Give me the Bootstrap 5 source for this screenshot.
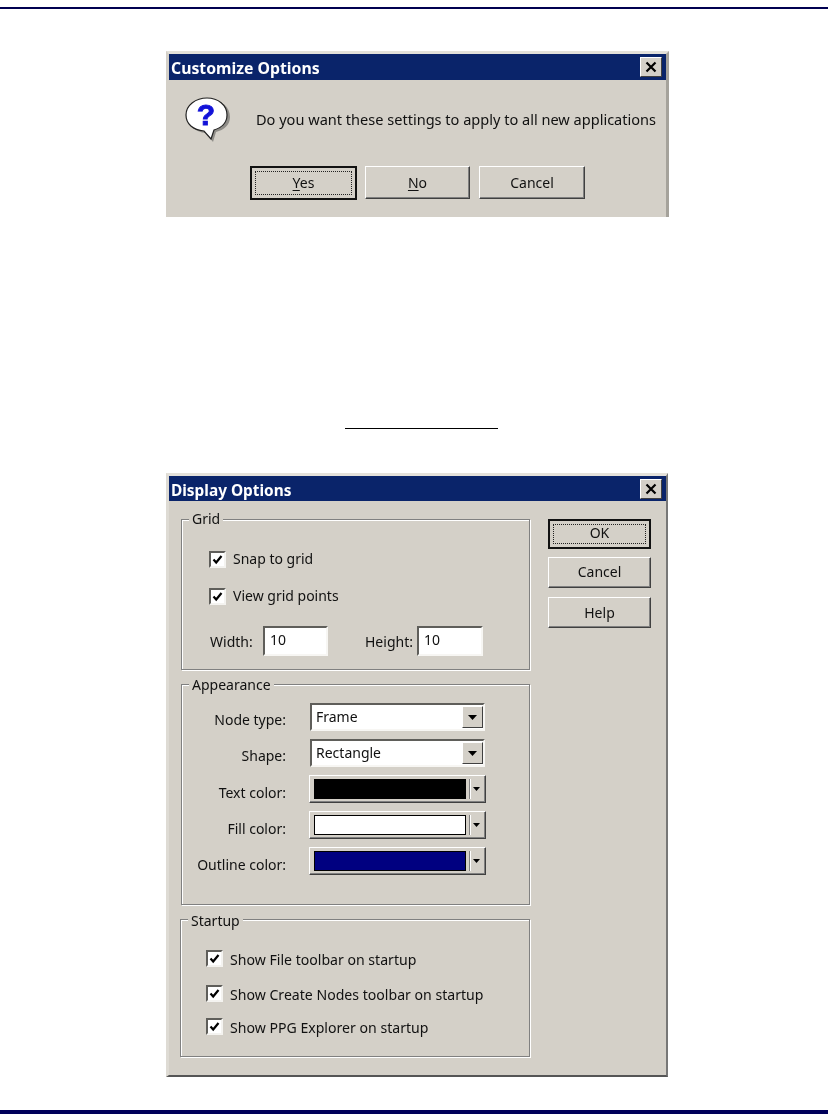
<!DOCTYPE html>
<html lang="en">
<head>
<meta charset="utf-8">
<title>Options dialogs</title>
<link href="https://cdn.jsdelivr.net/npm/bootstrap@5.3.0/dist/css/bootstrap.min.css" rel="stylesheet">
<style>
html,body{height:1114px;overflow:hidden;background:#fff}
body{font-family:"Noto Sans","DejaVu Sans",sans-serif;font-size:14px;color:#111;line-height:1.2}
.top-rule{height:2px;margin-top:7px;background:#000050}
.end-rule{height:4px;margin-top:33px;background:#00005a}
.mid-rule{width:153px;height:1px;margin:211px 0 44px 345px;background:#000}
.win{background:#d4d0c8;margin-left:166px;border:3px solid #d4d0c8;border-top-color:#e4e1da;filter:blur(.35px)}
.win-a{width:503px;height:166px;margin-top:42px;border-bottom:0;border-right-color:#a5a29b}
.win-b{width:502px;height:604px;border-right:2px solid #777;border-bottom:2px solid #555;border-left-color:#dedbd4}
.title{background:#0a246a;color:#fff;font-weight:700;padding:0 4px 0 2px}
.win-a .title{height:26px;font-size:15.8px}
.win-b .title{height:25px;font-size:15.4px}
.win-a .title-text{padding-top:2px}
.win-b .title-text{padding-top:5px}
.close-x{width:22px;height:20px;background:#d4d0c8;border:1px solid;border-color:#fff #404040 #404040 #fff}
.msg-row{padding:17px 0 0 16px}
.msg-text{margin-left:25px;padding-top:14px;font-size:14.55px}
.msg-btns{margin:23px 0 0 81px;gap:8px}
.msg-btns .wbtn{height:33px;width:105px}
.msg-btns .wbtn+.wbtn+.wbtn{margin-left:1px;width:106px}
.msg-btns .wbtn.is-default{height:34px;width:107px;padding-bottom:2px}
.wbtn{display:flex;align-items:center;justify-content:center;border-radius:0;padding:0;background:#d4d0c8;color:#111;font-size:14px;border:1px solid;border-color:#fff #404040 #404040 #fff;box-shadow:inset -1px -1px 0 #808080}
.wbtn.is-default{border:2px solid #111;box-shadow:none;position:relative}
.wbtn.is-default::after{content:"";position:absolute;inset:3px;border:1px dotted #222}
.wbtn u{text-underline-offset:2px}
.client{padding:18px 0 0 12px;gap:18px}
.left-col{width:349px;gap:14px}
.right-col{width:103px;gap:8px}
.right-col .wbtn{height:31px;width:103px;padding-bottom:3px}
.right-col .wbtn.is-default{height:30px}
.right-col .wbtn:last-child{margin-top:1px;padding-bottom:1px}
.group{position:relative;border:1px solid #808080;box-shadow:1px 1px 0 #fff,inset 1px 1px 0 #fff}
.group-name{position:absolute;left:7px;top:-9px;background:#d4d0c8;padding:0 3px;line-height:16px}
.g-look .group-name{top:-8px}
.g-start .group-name{top:-7px}
.g-grid{height:151px;padding:31px 0 0 27px}
.g-look{height:221px;padding:18px 0 0 0;gap:8px}
.g-start{height:138px;width:350px;margin-left:-1px;padding:30px 0 0 25px}
.check-row{height:17px;gap:7px;white-space:nowrap}
.g-grid .check-row{margin-bottom:20px}
.g-grid .check-row+.check-row{margin-bottom:21px}
.g-start .check-row{font-size:14.1px}
.g-start .check-row+.check-row{margin-top:18px}
.g-start .check-row+.check-row+.check-row{margin-top:16px}
.g-start .row-text{position:relative;top:2px}
.box{width:17px;height:17px;flex:none;background:#fff;border:2px solid;border-color:#5f5e5a #f4f3f0 #f4f3f0 #5f5e5a;display:flex;align-items:center;justify-content:center}
.size-row{padding-left:1px}
.lbl-w{width:53px;padding-top:3px}
.lbl-h{width:52px;margin-left:37px;padding-top:3px}
.edit{width:65px;height:30px;background:#fff;padding:4px 0 0 5px;border:2px solid;border-color:#5f5e5a #f7f6f3 #f7f6f3 #5f5e5a}
.edit-h{width:66px}
.look-row{height:28px;gap:24px}
.look-lbl{width:104px;text-align:right;padding-top:9px}
.look-lbl-low{padding-top:10px}
.combo{width:175px;height:28px;background:#fff;border:2px solid;border-color:#5f5e5a #f7f6f3 #f7f6f3 #5f5e5a;padding-left:4px}
.arrow-btn{width:21px;height:22px;background:#d4d0c8;border:1px solid;border-color:#fff #404040 #404040 #fff}
.swatch-btn{width:177px;height:28px;margin-left:-1px;background:#d4d0c8;border:1px solid;border-color:#fff #404040 #404040 #fff;box-shadow:inset -1px -1px 0 #808080;padding:4px 3px 4px 4px}
.swatch{width:152px;height:20px;border:1px solid #000}
.sw-black{background:#000}
.sw-white{background:#fff}
.sw-navy{background:#000080}
.split{width:2px;height:20px;margin-left:3px;border-left:1px solid #808080;border-right:1px solid #fff}
.split-arrow{flex:1}
</style>
</head>
<body>
<div class="top-rule"></div>

<div class="win win-a">
  <div class="title d-flex align-items-center justify-content-between">
    <span class="title-text">Customize Options</span>
    <span class="close-x d-flex align-items-center justify-content-center">
      <svg width="12" height="12" viewBox="0 0 12 12"><path d="M1.5 1.5 10.5 10.5M10.5 1.5 1.5 10.5" stroke="#000" stroke-width="2.2"/></svg>
    </span>
  </div>
  <div class="d-flex msg-row">
    <svg width="46" height="46" viewBox="0 0 46 46" class="flex-shrink-0">
      <path d="M25 3C37 3 45 10 45 20 45 28 39 33 31 35L28 45 21 36C10 35 3 29 3 20 3 10 13 3 25 3Z" fill="#8f8d88"/>
      <path d="M22 1C33 1 42 8 42 18 42 26 36 31 29 33L26 42 19 34C8 33 1 27 1 18 1 8 11 1 22 1Z" fill="#fff" stroke="#222" stroke-width="1.2"/>
      <text x="21" y="28" text-anchor="middle" font-family="Liberation Sans,sans-serif" font-weight="700" font-size="30" fill="#1212d8" stroke="#1212d8" stroke-width=".9">?</text>
    </svg>
    <div class="msg-text">Do you want these settings to apply to all new applications</div>
  </div>
  <div class="d-flex msg-btns">
    <button type="button" class="btn wbtn is-default"><span><u>Y</u>es</span></button>
    <button type="button" class="btn wbtn"><span><u>N</u>o</span></button>
    <button type="button" class="btn wbtn">Cancel</button>
  </div>
</div>

<div class="mid-rule"></div>

<div class="win win-b">
  <div class="title d-flex align-items-center justify-content-between">
    <span class="title-text">Display Options</span>
    <span class="close-x d-flex align-items-center justify-content-center">
      <svg width="12" height="12" viewBox="0 0 12 12"><path d="M1.5 1.5 10.5 10.5M10.5 1.5 1.5 10.5" stroke="#000" stroke-width="2.2"/></svg>
    </span>
  </div>
  <div class="d-flex client">
    <div class="d-flex flex-column left-col">
      <div class="group g-grid">
        <span class="group-name">Grid</span>
        <div class="d-flex align-items-center check-row"><span class="box"><svg width="11" height="11" viewBox="0 0 11 11"><path d="M1.5 5.5 4.2 8.5 9.5 2" fill="none" stroke="#000" stroke-width="2.2"/></svg></span><span class="row-text">Snap to grid</span></div>
        <div class="d-flex align-items-center check-row"><span class="box"><svg width="11" height="11" viewBox="0 0 11 11"><path d="M1.5 5.5 4.2 8.5 9.5 2" fill="none" stroke="#000" stroke-width="2.2"/></svg></span><span class="row-text">View grid points</span></div>
        <div class="d-flex align-items-center size-row">
          <span class="lbl-w">Width:</span><span class="edit">10</span>
          <span class="lbl-h">Height:</span><span class="edit edit-h">10</span>
        </div>
      </div>
      <div class="group g-look d-flex flex-column">
        <span class="group-name">Appearance</span>
        <div class="d-flex look-row"><span class="look-lbl">Node type:</span><div class="combo d-flex align-items-center justify-content-between"><span>Frame</span><span class="arrow-btn d-flex align-items-center justify-content-center"><svg width="9" height="5" viewBox="0 0 9 5"><path d="M0 0H9L4.5 5Z" fill="#000"/></svg></span></div></div>
        <div class="d-flex look-row"><span class="look-lbl">Shape:</span><div class="combo d-flex align-items-center justify-content-between"><span>Rectangle</span><span class="arrow-btn d-flex align-items-center justify-content-center"><svg width="9" height="5" viewBox="0 0 9 5"><path d="M0 0H9L4.5 5Z" fill="#000"/></svg></span></div></div>
        <div class="d-flex look-row"><span class="look-lbl look-lbl-low">Text color:</span><div class="swatch-btn d-flex align-items-center"><span class="swatch sw-black"></span><span class="split"></span><span class="split-arrow d-flex justify-content-center"><svg width="7" height="4" viewBox="0 0 7 4"><path d="M0 0H7L3.5 4Z" fill="#000"/></svg></span></div></div>
        <div class="d-flex look-row"><span class="look-lbl look-lbl-low">Fill color:</span><div class="swatch-btn d-flex align-items-center"><span class="swatch sw-white"></span><span class="split"></span><span class="split-arrow d-flex justify-content-center"><svg width="7" height="4" viewBox="0 0 7 4"><path d="M0 0H7L3.5 4Z" fill="#000"/></svg></span></div></div>
        <div class="d-flex look-row"><span class="look-lbl look-lbl-low">Outline color:</span><div class="swatch-btn d-flex align-items-center"><span class="swatch sw-navy"></span><span class="split"></span><span class="split-arrow d-flex justify-content-center"><svg width="7" height="4" viewBox="0 0 7 4"><path d="M0 0H7L3.5 4Z" fill="#000"/></svg></span></div></div>
      </div>
      <div class="group g-start">
        <span class="group-name">Startup</span>
        <div class="d-flex align-items-center check-row"><span class="box"><svg width="11" height="11" viewBox="0 0 11 11"><path d="M1.5 5.5 4.2 8.5 9.5 2" fill="none" stroke="#000" stroke-width="2.2"/></svg></span><span class="row-text">Show File toolbar on startup</span></div>
        <div class="d-flex align-items-center check-row"><span class="box"><svg width="11" height="11" viewBox="0 0 11 11"><path d="M1.5 5.5 4.2 8.5 9.5 2" fill="none" stroke="#000" stroke-width="2.2"/></svg></span><span class="row-text">Show Create Nodes toolbar on startup</span></div>
        <div class="d-flex align-items-center check-row"><span class="box"><svg width="11" height="11" viewBox="0 0 11 11"><path d="M1.5 5.5 4.2 8.5 9.5 2" fill="none" stroke="#000" stroke-width="2.2"/></svg></span><span class="row-text">Show PPG Explorer on startup</span></div>
      </div>
    </div>
    <div class="d-flex flex-column right-col">
      <button type="button" class="btn wbtn is-default">OK</button>
      <button type="button" class="btn wbtn">Cancel</button>
      <button type="button" class="btn wbtn">Help</button>
    </div>
  </div>
</div>

<div class="end-rule"></div>
<script src="https://cdn.jsdelivr.net/npm/bootstrap@5.3.0/dist/js/bootstrap.bundle.min.js"></script>
</body>
</html>
